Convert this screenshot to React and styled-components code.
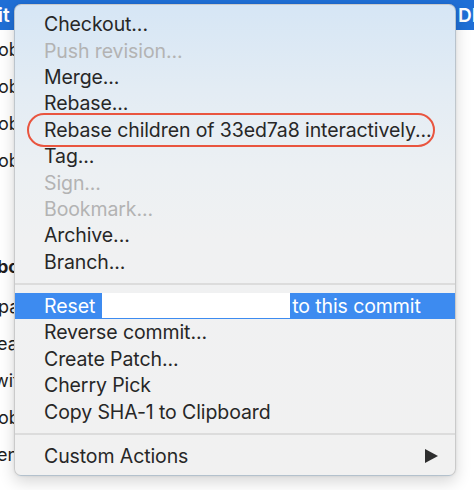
import React from "react";
import styled, { createGlobalStyle } from "styled-components";

const GlobalStyle = createGlobalStyle`
  html, body {
    margin: 0;
    padding: 0;
    background: #ffffff;
  }
  body {
    font-family: Inter, "Noto Sans", "Liberation Sans", sans-serif;
  }
`;

const Pagina = styled.div`
  position: relative;
  width: 474px;
  height: 490px;
  overflow: hidden;
  background: #ffffff;
`;

const BarraSuperior = styled.div`
  height: 30px;
  background: #1f6fd6;
  display: flex;
  justify-content: space-between;
  align-items: center;
  color: #ffffff;
  font-size: 19px;
  font-weight: 600;

  span:first-child {
    margin-left: -2px;
  }
  span:last-child {
    margin-right: -3px;
  }
`;

const ListaFondo = styled.ul`
  list-style: none;
  margin: 0;
  padding: 1px 0 0;
  display: flex;
  flex-direction: column;
`;

const FilaFondo = styled.li`
  height: 37px;
  line-height: 37px;
  font-size: 18px;
  color: #1e1e1e;
  white-space: nowrap;
  margin-left: ${(p) => p.$desplazar || 0}px;
  margin-top: ${(p) => p.$arriba || 0}px;
  font-weight: ${(p) => (p.$negrita ? 700 : 400)};
`;

const Menu = styled.div`
  position: absolute;
  top: 4px;
  left: 14px;
  width: 442px;
  box-sizing: border-box;
  padding: 6px 0;
  border-radius: 7px;
  border: 1px solid rgba(0, 0, 0, 0.16);
  background: linear-gradient(
    180deg,
    #d6e6f5 0%,
    #e3ecf4 18%,
    #ecf0f3 35%,
    #f0f1f2 50%,
    #f1f1f1 100%
  );
  box-shadow: 0 6px 16px rgba(0, 0, 0, 0.16), 0 0 3px rgba(0, 0, 0, 0.08);
`;

const Item = styled.div`
  position: relative;
  height: 26.4px;
  display: flex;
  align-items: center;
  padding: 0 17px 0 29px;
  font-size: 19.5px;
  letter-spacing: -0.1px;
  white-space: nowrap;
  color: ${(p) => (p.$activo ? "#ffffff" : p.$deshabilitado ? "#b3b3b3" : "#272727")};
  background: ${(p) => (p.$activo ? "#3d8bf0" : "transparent")};

  ${(p) =>
    p.$marcado &&
    `
    &::after {
      content: "";
      position: absolute;
      left: 12px;
      right: 20px;
      top: -4px;
      bottom: -4px;
      border: 2px solid #e9553f;
      border-radius: 17px;
    }
  `}
`;

const Separador = styled.div`
  height: 18px;
  display: flex;
  align-items: center;

  &::before {
    content: "";
    flex: 1;
    height: 2px;
    background: #dcdcdc;
  }
`;

const Tapado = styled.span`
  display: inline-block;
  width: 188px;
  height: 25px;
  margin: 0 2px 1px 7px;
  background: #ffffff;
  align-self: flex-start;
`;

const Flecha = styled.span`
  margin-left: auto;
  width: 0;
  height: 0;
  border-top: 7px solid transparent;
  border-bottom: 7px solid transparent;
  border-left: 13px solid #2e2e2e;
`;

const filasFondo = [
  { texto: "ob", desplazar: -2 },
  { texto: "ob", desplazar: -2 },
  { texto: "ob", desplazar: -2 },
  { texto: "ob", desplazar: -2 },
  { texto: "bc", desplazar: -3, negrita: true, arriba: 69 },
  { texto: "pa", desplazar: -2, arriba: 3 },
  { texto: "ea", desplazar: -3 },
  { texto: "wit", desplazar: -6 },
  { texto: "ob", desplazar: -2 },
  { texto: "en", desplazar: -3 },
];

const grupoUno = [
  { texto: "Checkout..." },
  { texto: "Push revision...", deshabilitado: true },
  { texto: "Merge..." },
  { texto: "Rebase..." },
  { texto: "Rebase children of 33ed7a8 interactively...", marcado: true },
  { texto: "Tag..." },
  { texto: "Sign...", deshabilitado: true },
  { texto: "Bookmark...", deshabilitado: true },
  { texto: "Archive..." },
  { texto: "Branch..." },
];

const grupoDos = [
  "Reverse commit...",
  "Create Patch...",
  "Cherry Pick",
  "Copy SHA-1 to Clipboard",
];

const App = () => {
  return (
    <>
      <GlobalStyle />
      <Pagina>
        <BarraSuperior>
          <span>it</span>
          <span>DI</span>
        </BarraSuperior>
        <ListaFondo>
          {filasFondo.map((f, i) => (
            <FilaFondo
              key={i}
              $desplazar={f.desplazar}
              $negrita={f.negrita}
              $arriba={f.arriba}
            >
              {f.texto}
            </FilaFondo>
          ))}
        </ListaFondo>

        <Menu>
          {grupoUno.map((item) => (
            <Item
              key={item.texto}
              $deshabilitado={item.deshabilitado}
              $marcado={item.marcado}
            >
              {item.texto}
            </Item>
          ))}
          <Separador />
          <Item $activo>
            Reset
            <Tapado />
            to this commit
          </Item>
          {grupoDos.map((texto) => (
            <Item key={texto}>{texto}</Item>
          ))}
          <Separador />
          <Item>
            Custom Actions
            <Flecha />
          </Item>
        </Menu>
      </Pagina>
    </>
  );
};

export default App;
